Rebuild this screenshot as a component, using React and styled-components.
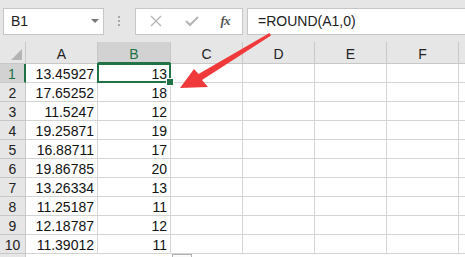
import React from 'react';
import styled, { createGlobalStyle } from 'styled-components';

const Global = createGlobalStyle`
    html, body {
        margin: 0;
        padding: 0;
        background: #ffffff;
    }
    body {
        font-family: "Liberation Sans", Arial, sans-serif;
    }
`;

const Page = styled.div`
    position: relative;
    width: 465px;
    height: 257px;
    overflow: hidden;
    background: #ffffff;
`;

const Toolbar = styled.div`
    display: flex;
    align-items: center;
    height: 42px;
    padding: 0 0 0 3px;
    box-sizing: border-box;
    background: #e6e6e6;
`;

const NameBox = styled.div`
    display: flex;
    align-items: center;
    justify-content: space-between;
    width: 101px;
    height: 27px;
    box-sizing: border-box;
    padding: 0 4px 0 7px;
    background: #fff;
    border: 1px solid #c6c6c6;
    font-size: 14px;
    color: #222;
`;

const DropArrow = styled.span`
    width: 0;
    height: 0;
    border-left: 4px solid transparent;
    border-right: 4px solid transparent;
    border-top: 4px solid #777;
`;

const Grip = styled.div`
    display: flex;
    flex-direction: column;
    gap: 2px;
    margin: 0 15px 0 14px;
    > span {
        width: 2px;
        height: 2px;
        background: #a8a8a8;
    }
`;

const ButtonBox = styled.div`
    display: flex;
    align-items: center;
    justify-content: space-around;
    width: 108px;
    height: 27px;
    box-sizing: border-box;
    padding: 0 2px;
    background: #fff;
    border: 1px solid #c6c6c6;
`;

const Fx = styled.span`
    font-family: "Liberation Serif", serif;
    font-style: italic;
    font-weight: bold;
    font-size: 13px;
    color: #555;
    letter-spacing: -1px;
`;

const FormulaBox = styled.div`
    flex: 1;
    display: flex;
    align-items: center;
    height: 27px;
    margin-left: 4px;
    padding-left: 10px;
    box-sizing: border-box;
    background: #fff;
    border: 1px solid #c6c6c6;
    border-right: none;
    font-size: 14px;
    color: #222;
`;

const Grid = styled.div`
    display: grid;
    grid-template-columns: 26px 72px 73px 72px 72px 72px 72px 72px;
    grid-template-rows: 22px;
    grid-auto-rows: 19px;
`;

const Corner = styled.div`
    position: relative;
    background: #e6e6e6;
    border-right: 1px solid #c8c8c8;
    border-bottom: 1px solid #c8c8c8;
    box-sizing: border-box;
    &::after {
        content: '';
        position: absolute;
        right: 3px;
        bottom: 3px;
        width: 0;
        height: 0;
        border-left: 11px solid transparent;
        border-bottom: 11px solid #b4b4b4;
    }
`;

const ColHead = styled.div`
    display: flex;
    align-items: center;
    justify-content: center;
    box-sizing: border-box;
    background: ${p => (p.$active ? '#d2d2d2' : '#e6e6e6')};
    border-right: 1px solid #c8c8c8;
    border-bottom: ${p => (p.$active ? '2px solid #217346' : '1px solid #c8c8c8')};
    color: ${p => (p.$active ? '#217346' : '#222')};
    font-size: 14px;
    padding-top: 3px;
`;

const RowHead = styled.div`
    display: flex;
    align-items: center;
    justify-content: center;
    box-sizing: border-box;
    background: ${p => (p.$active ? '#d2d2d2' : '#e6e6e6')};
    border-right: ${p => (p.$active ? '2px solid #217346' : '1px solid #c8c8c8')};
    border-bottom: 1px solid #c8c8c8;
    color: ${p => (p.$active ? '#217346' : '#222')};
    font-size: 14px;
    padding-top: 1px;
`;

const Cell = styled.div`
    position: relative;
    display: flex;
    align-items: center;
    justify-content: flex-end;
    box-sizing: border-box;
    padding: 1px 3px 0 0;
    border-right: 1px solid #d4d4d4;
    border-bottom: 1px solid #d4d4d4;
    font-size: 14px;
    color: #111;
    ${p => p.$selected && `
        &::after {
            content: '';
            position: absolute;
            left: -1px;
            top: -1px;
            right: -1px;
            bottom: -1px;
            border: 2px solid #217346;
        }
        &::before {
            content: '';
            position: absolute;
            right: -4px;
            bottom: -4px;
            width: 6px;
            height: 6px;
            background: #217346;
            border: 1px solid #fff;
            z-index: 2;
        }
    `}
`;

const QuickBox = styled.div`
    position: absolute;
    left: 172px;
    top: 254px;
    width: 18px;
    height: 10px;
    border: 1px solid #b0b0b0;
    background: #fafafa;
`;

const ArrowLayer = styled.svg`
    position: absolute;
    left: 0;
    top: 0;
    pointer-events: none;
`;

const colA = ['13.45927', '17.65252', '11.5247', '19.25871', '16.88711', '19.86785', '13.26334', '11.25187', '12.18787', '11.39012'];
const colB = ['13', '18', '12', '19', '17', '20', '13', '11', '12', '11'];
const letters = ['A', 'B', 'C', 'D', 'E', 'F', ''];

function App() {
    return (
        <Page>
            <Global />
            <Toolbar>
                <NameBox>
                    <span>B1</span>
                    <DropArrow />
                </NameBox>
                <Grip>
                    <span />
                    <span />
                    <span />
                </Grip>
                <ButtonBox>
                    <svg width="14" height="14" viewBox="0 0 14 14">
                        <path d="M2 2 L12 12 M12 2 L2 12" stroke="#b4b4b4" strokeWidth="1.3" fill="none" />
                    </svg>
                    <svg width="16" height="14" viewBox="0 0 16 14">
                        <path d="M2 7 L6 11 L14 3" stroke="#b4b4b4" strokeWidth="2" fill="none" />
                    </svg>
                    <Fx>fx</Fx>
                </ButtonBox>
                <FormulaBox>=ROUND(A1,0)</FormulaBox>
            </Toolbar>

            <Grid>
                <Corner />
                {letters.map((l, i) => (
                    <ColHead key={i} $active={l === 'B'}>{l}</ColHead>
                ))}
                {colA.map((a, i) => (
                    <React.Fragment key={i}>
                        <RowHead $active={i === 0}>{i + 1}</RowHead>
                        <Cell>{a}</Cell>
                        <Cell $selected={i === 0}>{colB[i]}</Cell>
                        <Cell />
                        <Cell />
                        <Cell />
                        <Cell />
                        <Cell />
                    </React.Fragment>
                ))}
                <RowHead />
            </Grid>

            <QuickBox />

            <ArrowLayer width="465" height="257" viewBox="0 0 465 257">
                <polygon
                    points="180,88 194,69 198.5,74 269.5,33 271,35.5 202,80 208,87"
                    fill="#f0393a"
                />
            </ArrowLayer>
        </Page>
    );
}

export default App
